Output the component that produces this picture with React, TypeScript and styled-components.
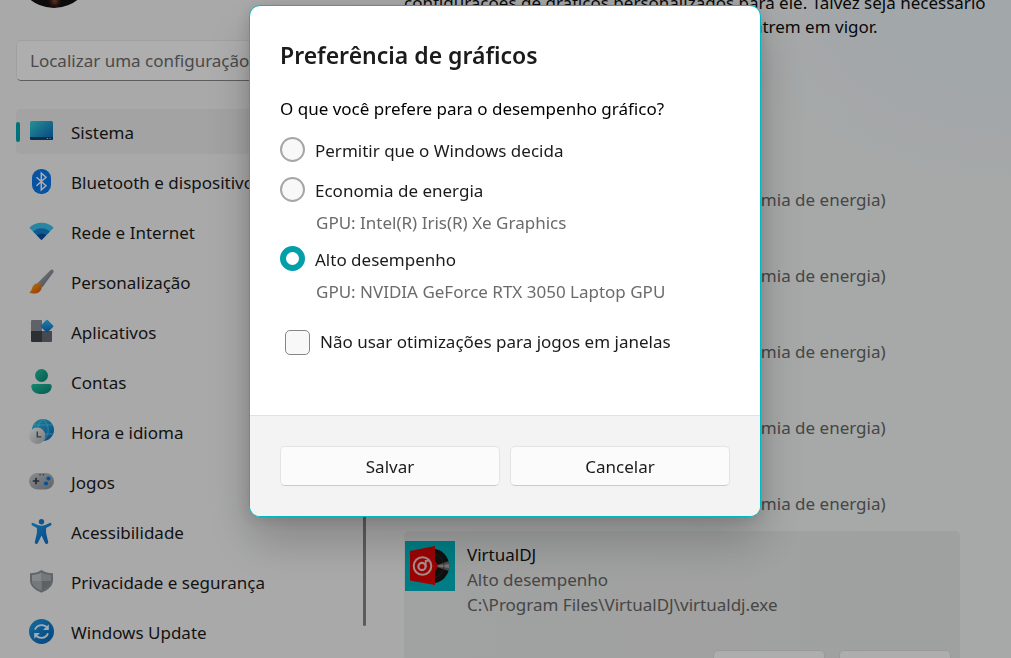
import React, { useState } from "react";
import styled, { createGlobalStyle } from "styled-components";

const GlobalStyle = createGlobalStyle`
  *, *::before, *::after { box-sizing: border-box; }
  body {
    margin: 0;
    overflow: hidden;
    font-family: "Noto Sans", "Open Sans", sans-serif;
    font-size: 17px;
    line-height: 24px;
    color: #1b1b1b;
    background: #f3f3f3;
  }
`;

const Page = styled.div`
  display: flex;
  height: 100vh;
  overflow: hidden;
  background:
    radial-gradient(ellipse 300px 200px at 100% 0, #e8eff3 30%, rgba(232, 239, 243, 0) 100%),
    linear-gradient(90deg, rgba(239, 242, 241, 0) 20%, #eff2f1 90%),
    #f3f3f3;
`;

const Sidebar = styled.aside`
  display: flex;
  flex-direction: column;
  flex: 0 0 366px;
  padding-left: 16px;
`;

const Avatar = styled.div`
  flex: none;
  width: 76px;
  height: 76px;
  margin-top: -68px;
  border-radius: 50%;
  background: radial-gradient(circle at 51% 91%, #8a4a30 0, #3a2018 4px, #141010 7px);
`;

const SearchBox = styled.input`
  flex: none;
  height: 41px;
  margin: 32px 14px 28px 0;
  padding: 0 13px;
  border: 1px solid #e6e6e6;
  border-bottom-color: #868686;
  border-radius: 5px;
  background: #fafafa;
  font: inherit;
  &::placeholder { color: #6a6a6a; opacity: 1; }
`;

const NavArea = styled.div`
  display: flex;
  flex: 1;
  min-height: 0;
`;

const Nav = styled.nav`
  display: flex;
  flex: 1;
  flex-direction: column;
  gap: 5px;
  margin-right: 13px;
`;

const NavLink = styled.a<{ $active?: boolean }>`
  display: flex;
  flex: none;
  align-items: center;
  height: 45px;
  border-radius: 5px;
  white-space: nowrap;
  color: inherit;
  text-decoration: none;
  background: ${(p) => (p.$active ? "#eaeaea" : "transparent")};
  &::before {
    content: "";
    width: 4px;
    height: 20px;
    margin-right: 9px;
    border-radius: 2px;
    background: ${(p) => (p.$active ? "#00a5ad" : "transparent")};
  }
  svg { flex: none; width: 25px; height: 25px; margin-right: 17px; }
`;

const LabelText = styled.span`
  padding-top: 2px;
`;

const ScrollThumb = styled.div`
  width: 3px;
  margin-bottom: 32px;
  border-radius: 2px;
  background: #858585;
`;

const Main = styled.main`
  flex: 1;
  min-width: 0;
  margin-top: -9px;
  padding: 0 51px 0 38px;
`;

const Intro = styled.p`
  margin: 0 0 112px;
  color: #0c0c0c;
  span { display: block; white-space: nowrap; }
`;

const AppList = styled.ul`
  margin: 0;
  padding: 0;
  list-style: none;
`;

const AppRow = styled.li<{ $selected?: boolean }>`
  display: grid;
  grid-template-columns: 50px minmax(0, 1fr);
  column-gap: 12px;
  min-height: ${(p) => (p.$selected ? "200px" : "76px")};
  align-content: start;
  padding: 10px 9px 0 1px;
  border-radius: 5px;
  background: ${(p) => (p.$selected ? "rgba(0, 0, 0, .045)" : "transparent")};
`;

const AppIcon = styled.div<{ $tone: string }>`
  width: 50px;
  height: 50px;
  background: ${(p) => p.$tone};
  svg { display: block; }
`;

const AppText = styled.div`
  padding-top: 1px;
  line-height: 25px;
  color: #656565;
  strong { display: block; font-weight: 400; color: #121212; }
  span { display: block; white-space: nowrap; }
`;

const RowActions = styled.div`
  grid-column: 1 / -1;
  display: flex;
  justify-content: flex-end;
  gap: 14px;
  margin-top: 33px;
`;

const RowButton = styled.button`
  width: 112px;
  height: 40px;
  border: 1px solid #dcdcdc;
  border-radius: 5px;
  background: #f8f8f8;
  font: inherit;
`;

const Scrim = styled.div`
  position: fixed;
  inset: 0;
  display: flex;
  align-items: flex-start;
  justify-content: center;
  padding: 5px 17px 5px 16px;
  background: rgba(0, 0, 0, .3);
`;

const Dialog = styled.form`
  width: 100%;
  max-width: 512px;
  overflow: hidden;
  border: 1px solid #00b7c3;
  border-radius: 11px;
  background: #fff;
  box-shadow: 0 24px 48px rgba(0, 0, 0, .22), 0 2px 16px rgba(0, 0, 0, .14);
`;

const DialogBody = styled.div`
  padding: 33px 30px 53px;
`;

const Title = styled.h1`
  margin: 0 0 26px;
  font-size: 23px;
  font-weight: 600;
  line-height: 32px;
`;

const Choices = styled.fieldset`
  margin: 0 0 14px;
  padding: 0;
  border: 0;
`;

const Question = styled.legend`
  margin-bottom: 9px;
  padding: 0;
  color: #000;
`;

const Option = styled.label<{ $inset?: boolean }>`
  display: flex;
  align-items: center;
  gap: 10px;
  height: 40px;
  padding-left: ${(p) => (p.$inset ? "5px" : "0")};
`;

const Radio = styled.input`
  appearance: none;
  flex: none;
  width: 25px;
  height: 25px;
  margin: 0 0 2px;
  border: 2px solid #a6a6a6;
  border-radius: 50%;
  background: #f8f8f8;
  &:checked { border: 6px solid #009faa; background: #fff; }
`;

const Check = styled.input`
  appearance: none;
  flex: none;
  width: 25px;
  height: 25px;
  margin: 0;
  border: 1px solid #868686;
  border-radius: 5px;
  background: #f8f8f8;
  &:checked { background: #009faa; }
`;

const Hint = styled.div`
  height: 29px;
  padding-left: 36px;
  line-height: 26px;
  color: #6b6b6b;
`;

const DialogFooter = styled.footer`
  display: flex;
  gap: 10px;
  padding: 30px;
  border-top: 1px solid #e2e2e2;
  background: #f3f3f3;
`;

const DialogButton = styled.button`
  flex: 1;
  height: 40px;
  padding: 2px 0 0;
  border: 1px solid #e4e4e4;
  border-bottom-color: #c9c9c9;
  border-radius: 5px;
  background: #fbfbfb;
  font: inherit;
  color: #1b1b1b;
`;

const DisplayIcon = () => (
  <svg viewBox="0 0 25 25">
    <defs>
      <linearGradient id="disp" x1="0" y1="0" x2="1" y2="1">
        <stop stopColor="#35d0d6" /><stop offset="1" stopColor="#0a62b8" />
      </linearGradient>
    </defs>
    <rect x="1" y="2" width="23" height="19" rx="1.5" fill="url(#disp)" />
    <path d="M1 18h23v1.500a1.500 1.500 0 0 1-1.500 1.500h-20A1.500 1.500 0 0 1 1 19.500z" fill="#0b456e" />
    <path d="M18 19h1v1h-1zM20.500 19h1v1h-1z" fill="#9fd4ee" />
  </svg>
);

const BluetoothIcon = () => (
  <svg viewBox="0 0 25 25">
    <rect x="3" y="0" width="19" height="25" rx="9" fill="#0a78e8" />
    <path d="M7.500 8.200l9.500 8.600-4.700 4V4.200l4.700 4-9.500 8.600" fill="none" stroke="#f4f8ff" strokeWidth="1.500" />
  </svg>
);

const WifiIcon = () => (
  <svg viewBox="0 0 25 25">
    <path d="M.3 8.700a17.500 17.500 0 0 1 24.400 0L12.500 21z" fill="#3cc0ea" />
    <path d="M4.100 12.500a12.200 12.200 0 0 1 16.800 0L12.500 21z" fill="#1682cf" />
    <path d="M7.800 16.200a7 7 0 0 1 9.400 0L12.500 21z" fill="#0b4d9c" />
  </svg>
);

const BrushIcon = () => (
  <svg viewBox="0 0 25 25">
    <defs>
      <linearGradient id="handle" x1="0" y1="0" x2="1" y2="1">
        <stop stopColor="#b8bec6" /><stop offset="1" stopColor="#5c626a" />
      </linearGradient>
      <linearGradient id="bristle" x1="0" y1="0" x2="1" y2="1">
        <stop stopColor="#ffb31e" /><stop offset="1" stopColor="#d8480c" />
      </linearGradient>
    </defs>
    <path d="M8.300 14.200L21.400 1.200c1.800-1.600 4 .2 2.800 2.200L13.200 18.400z" fill="url(#handle)" />
    <path d="M4.300 16.600c2-3 6-3.300 7.900-.6 1.300 2.300.2 5.300-2 7C7.500 25 2.600 24.900.3 23.500c2.600-1.500 2.500-4.600 4-6.900z" fill="url(#bristle)" />
  </svg>
);

const AppsIcon = () => (
  <svg viewBox="0 0 25 25">
    <defs>
      <linearGradient id="dia" x1="0" y1="0" x2="1" y2="1">
        <stop stopColor="#32b8ef" /><stop offset="1" stopColor="#0a64bc" />
      </linearGradient>
    </defs>
    <path d="M3 1h10v11H2V2a1 1 0 0 1 1-1z" fill="#888e96" />
    <path d="M2 12h11v11H3a1 1 0 0 1-1-1z" fill="#40454a" />
    <path d="M13 12h10v10a1 1 0 0 1-1 1h-9z" fill="#656b73" />
    <rect x="13.200" y="2.400" width="9.600" height="9.600" rx="1" transform="rotate(45 18 7.200)" fill="url(#dia)" />
  </svg>
);

const PersonIcon = () => (
  <svg viewBox="0 0 25 25">
    <defs>
      <linearGradient id="person" x1="0" y1="0" x2="1" y2="1">
        <stop stopColor="#22c3a1" /><stop offset="1" stopColor="#0c8273" />
      </linearGradient>
    </defs>
    <circle cx="12.500" cy="6.500" r="6.500" fill="url(#person)" />
    <path d="M4.500 15h16c1.300 0 2.200.9 2.200 2.200 0 5-4.200 7.800-10.200 7.800S2.300 22.200 2.300 17.200C2.300 15.900 3.200 15 4.500 15z" fill="url(#person)" />
  </svg>
);

const TimeIcon = () => (
  <svg viewBox="0 0 25 25">
    <defs>
      <linearGradient id="globe" x1="0" y1="0" x2="1" y2="1">
        <stop stopColor="#35c4de" /><stop offset="1" stopColor="#0a66bd" />
      </linearGradient>
      <linearGradient id="clock" x1="0" y1="0" x2="1" y2="1">
        <stop stopColor="#f7f7f7" /><stop offset="1" stopColor="#aab0b6" />
      </linearGradient>
    </defs>
    <circle cx="14" cy="11" r="11" fill="url(#globe)" />
    <path d="M4.500 6h19M3.500 15h21M14 0c-7 6-7 16 0 22M14 0c7 6 7 16 0 22" fill="none" stroke="#62cfe6" strokeWidth=".7" />
    <circle cx="8.200" cy="16.800" r="8.200" fill="url(#clock)" />
    <path d="M8.300 12.500v5.400h4" fill="none" stroke="#4c5258" strokeWidth="1.300" />
  </svg>
);

const GameIcon = () => (
  <svg viewBox="0 0 25 25">
    <defs>
      <linearGradient id="pad" x1="0" y1="0" x2="1" y2="1">
        <stop stopColor="#c4c9cf" /><stop offset="1" stopColor="#878e95" />
      </linearGradient>
    </defs>
    <rect x="0" y="4" width="25" height="16.500" rx="8.200" fill="url(#pad)" />
    <path d="M7 8.800v6.400M3.800 12h6.400" stroke="#3b4046" strokeWidth="1.700" fill="none" />
    <circle cx="11" cy="5.800" r=".7" fill="#3b4046" /><circle cx="14.300" cy="5.800" r=".7" fill="#3b4046" />
    <circle cx="19.500" cy="9.500" r="2.100" fill="#0c74d4" /><circle cx="17" cy="14.500" r="2.100" fill="#0c74d4" />
  </svg>
);

const AccessIcon = () => (
  <svg viewBox="0 0 25 25">
    <defs>
      <linearGradient id="acc" x1="0" y1="0" x2="1" y2="1">
        <stop stopColor="#1c9ae6" /><stop offset="1" stopColor="#0a68c2" />
      </linearGradient>
    </defs>
    <path d="M4.300 3.900l4.500 2a9 9 0 0 0 7.400 0l4.500-2c1.700-.6 2.600 1.900 1 2.700l-4.600 2.300v5l2.100 9.100c.3 1.900-2.300 2.700-3.100.9l-3.600-7.300-3.600 7.300c-.8 1.800-3.400 1-3.100-.9l2.100-9.100v-5L3.300 6.600c-1.600-.8-.7-3.300 1-2.700z" fill="url(#acc)" />
    <circle cx="12.500" cy="2.700" r="2.700" fill="#1478d0" />
  </svg>
);

const ShieldIcon = () => (
  <svg viewBox="0 0 25 25">
    <path d="M12.500 1c3.500 2.300 7 3.200 11.500 3.300v7c0 5.700-4.700 9.700-11.500 12.400C5.700 21 1 17 1 11.300v-7C5.500 4.200 9 3.300 12.500 1z" fill="#8c9197" />
    <path d="M12.500 3.600v17.700C6.700 18.900 3 15.600 3 11.200V6.100c3.600-.2 6.700-1 9.500-2.500z" fill="#bfc4c9" />
    <path d="M12.500 3.600v17.700c5.800-2.400 9.500-5.700 9.500-10.100V6.100c-3.600-.2-6.700-1-9.500-2.500z" fill="#a6abb0" />
    <path d="M12.500 12H22c-.4 4.100-4 7-9.500 9.300z" fill="#858b91" />
    <path d="M12.500 12H3c.4 4.100 4 7 9.500 9.300z" fill="#a8adb2" />
  </svg>
);

const UpdateIcon = () => (
  <svg viewBox="0 0 25 25">
    <defs>
      <linearGradient id="upd" x1="0" y1="0" x2="1" y2="1">
        <stop stopColor="#1c9ae2" /><stop offset="1" stopColor="#0562b8" />
      </linearGradient>
    </defs>
    <circle cx="12.500" cy="12.500" r="12.500" fill="url(#upd)" />
    <path d="M6 10.700a7.200 7.200 0 0 1 12.800-1.200M19 14.300A7.200 7.200 0 0 1 6.200 15.500" fill="none" stroke="#eaf4fc" strokeWidth="1.900" />
    <path d="M19.800 5.200v5.800h-5.800zM5.200 19.800V14H11z" fill="#eaf4fc" />
  </svg>
);

const VirtualDjIcon = () => (
  <svg viewBox="0 0 50 50" width="50" height="50">
    <circle cx="27" cy="25" r="17.300" fill="#171717" />
    <path d="M29 25l15-5v10z" fill="#6e6e6e" />
    <path d="M29 25l15.300-2v4z" fill="#a8a8a8" />
    <circle cx="27" cy="25" r="12" fill="none" stroke="#333" strokeWidth=".6" />
    <circle cx="27" cy="25" r="5.500" fill="#df0000" />
    <path d="M5 10l25-5v39L5 39.500z" fill="#e00505" />
    <circle cx="17.500" cy="25" r="8.800" fill="none" stroke="#f1caca" strokeWidth="2" />
    <circle cx="17" cy="25.500" r="3.600" fill="none" stroke="#f1caca" strokeWidth="2.200" />
    <path d="M20.700 26V19.800h3" fill="none" stroke="#f1caca" strokeWidth="1.800" />
  </svg>
);

const navItems = [
  { label: "Sistema", Icon: DisplayIcon },
  { label: "Bluetooth e dispositivos", Icon: BluetoothIcon },
  { label: "Rede e Internet", Icon: WifiIcon },
  { label: "Personalização", Icon: BrushIcon },
  { label: "Aplicativos", Icon: AppsIcon },
  { label: "Contas", Icon: PersonIcon },
  { label: "Hora e idioma", Icon: TimeIcon },
  { label: "Jogos", Icon: GameIcon },
  { label: "Acessibilidade", Icon: AccessIcon },
  { label: "Privacidade e segurança", Icon: ShieldIcon },
  { label: "Windows Update", Icon: UpdateIcon },
];

const apps = [
  { name: "Câmera", tone: "#7d8790" },
  { name: "Filmes e TV", tone: "#2878c8" },
  { name: "Fotos", tone: "#3a8fd0" },
  { name: "Microsoft Edge", tone: "#1e90a8" },
  { name: "Microsoft Store", tone: "#4478b8" },
];

const options = [
  { id: "auto", label: "Permitir que o Windows decida" },
  { id: "eco", label: "Economia de energia", hint: "GPU: Intel(R) Iris(R) Xe Graphics" },
  { id: "high", label: "Alto desempenho", hint: "GPU: NVIDIA GeForce RTX 3050 Laptop GPU" },
];

export default function App() {
  const [choice, setChoice] = useState("high");
  const [noOptimizations, setNoOptimizations] = useState(false);

  return (
    <>
      <GlobalStyle />
      <Page>
        <Sidebar>
          <Avatar />
          <SearchBox type="search" aria-label="Localizar uma configuração" placeholder="Localizar uma configuração" />
          <NavArea>
            <Nav>
              {navItems.map(({ label, Icon }, i) => (
                <NavLink href="#" key={label} $active={i === 0}>
                  <Icon />
                  <LabelText>{label}</LabelText>
                </NavLink>
              ))}
            </Nav>
            <ScrollThumb />
          </NavArea>
        </Sidebar>
        <Main>
          <Intro>
            <span>configurações de gráficos personalizados para ele. Talvez seja necessário</span>
            <span>reabrir o aplicativo para que as alterações entrem em vigor.</span>
          </Intro>
          <AppList>
            {apps.map(({ name, tone }) => (
              <AppRow key={name}>
                <AppIcon $tone={tone} />
                <AppText>
                  <strong>{name}</strong>
                  <span>Deixar que o Windows decida (Economia de energia)</span>
                </AppText>
              </AppRow>
            ))}
            <AppRow $selected>
              <AppIcon $tone="#00b4be"><VirtualDjIcon /></AppIcon>
              <AppText>
                <strong>VirtualDJ</strong>
                <span>Alto desempenho</span>
                <span>C:\Program Files\VirtualDJ\virtualdj.exe</span>
              </AppText>
              <RowActions>
                <RowButton type="button">Opções</RowButton>
                <RowButton type="button">Remover</RowButton>
              </RowActions>
            </AppRow>
          </AppList>
        </Main>
      </Page>
      <Scrim>
        <Dialog role="dialog" aria-modal="true" aria-labelledby="dialog-title" onSubmit={(e) => e.preventDefault()}>
          <DialogBody>
            <Title id="dialog-title">Preferência de gráficos</Title>
            <Choices>
              <Question>O que você prefere para o desempenho gráfico?</Question>
              {options.map(({ id, label, hint }) => (
                <React.Fragment key={id}>
                  <Option htmlFor={id}>
                    <Radio
                      type="radio"
                      id={id}
                      name="gpu"
                      checked={choice === id}
                      onChange={() => setChoice(id)}
                    />
                    <LabelText>{label}</LabelText>
                  </Option>
                  {hint && <Hint>{hint}</Hint>}
                </React.Fragment>
              ))}
            </Choices>
            <Option htmlFor="windowed" $inset>
              <Check
                type="checkbox"
                id="windowed"
                checked={noOptimizations}
                onChange={(e) => setNoOptimizations(e.target.checked)}
              />
              Não usar otimizações para jogos em janelas
            </Option>
          </DialogBody>
          <DialogFooter>
            <DialogButton type="submit">Salvar</DialogButton>
            <DialogButton type="button">Cancelar</DialogButton>
          </DialogFooter>
        </Dialog>
      </Scrim>
    </>
  );
}
